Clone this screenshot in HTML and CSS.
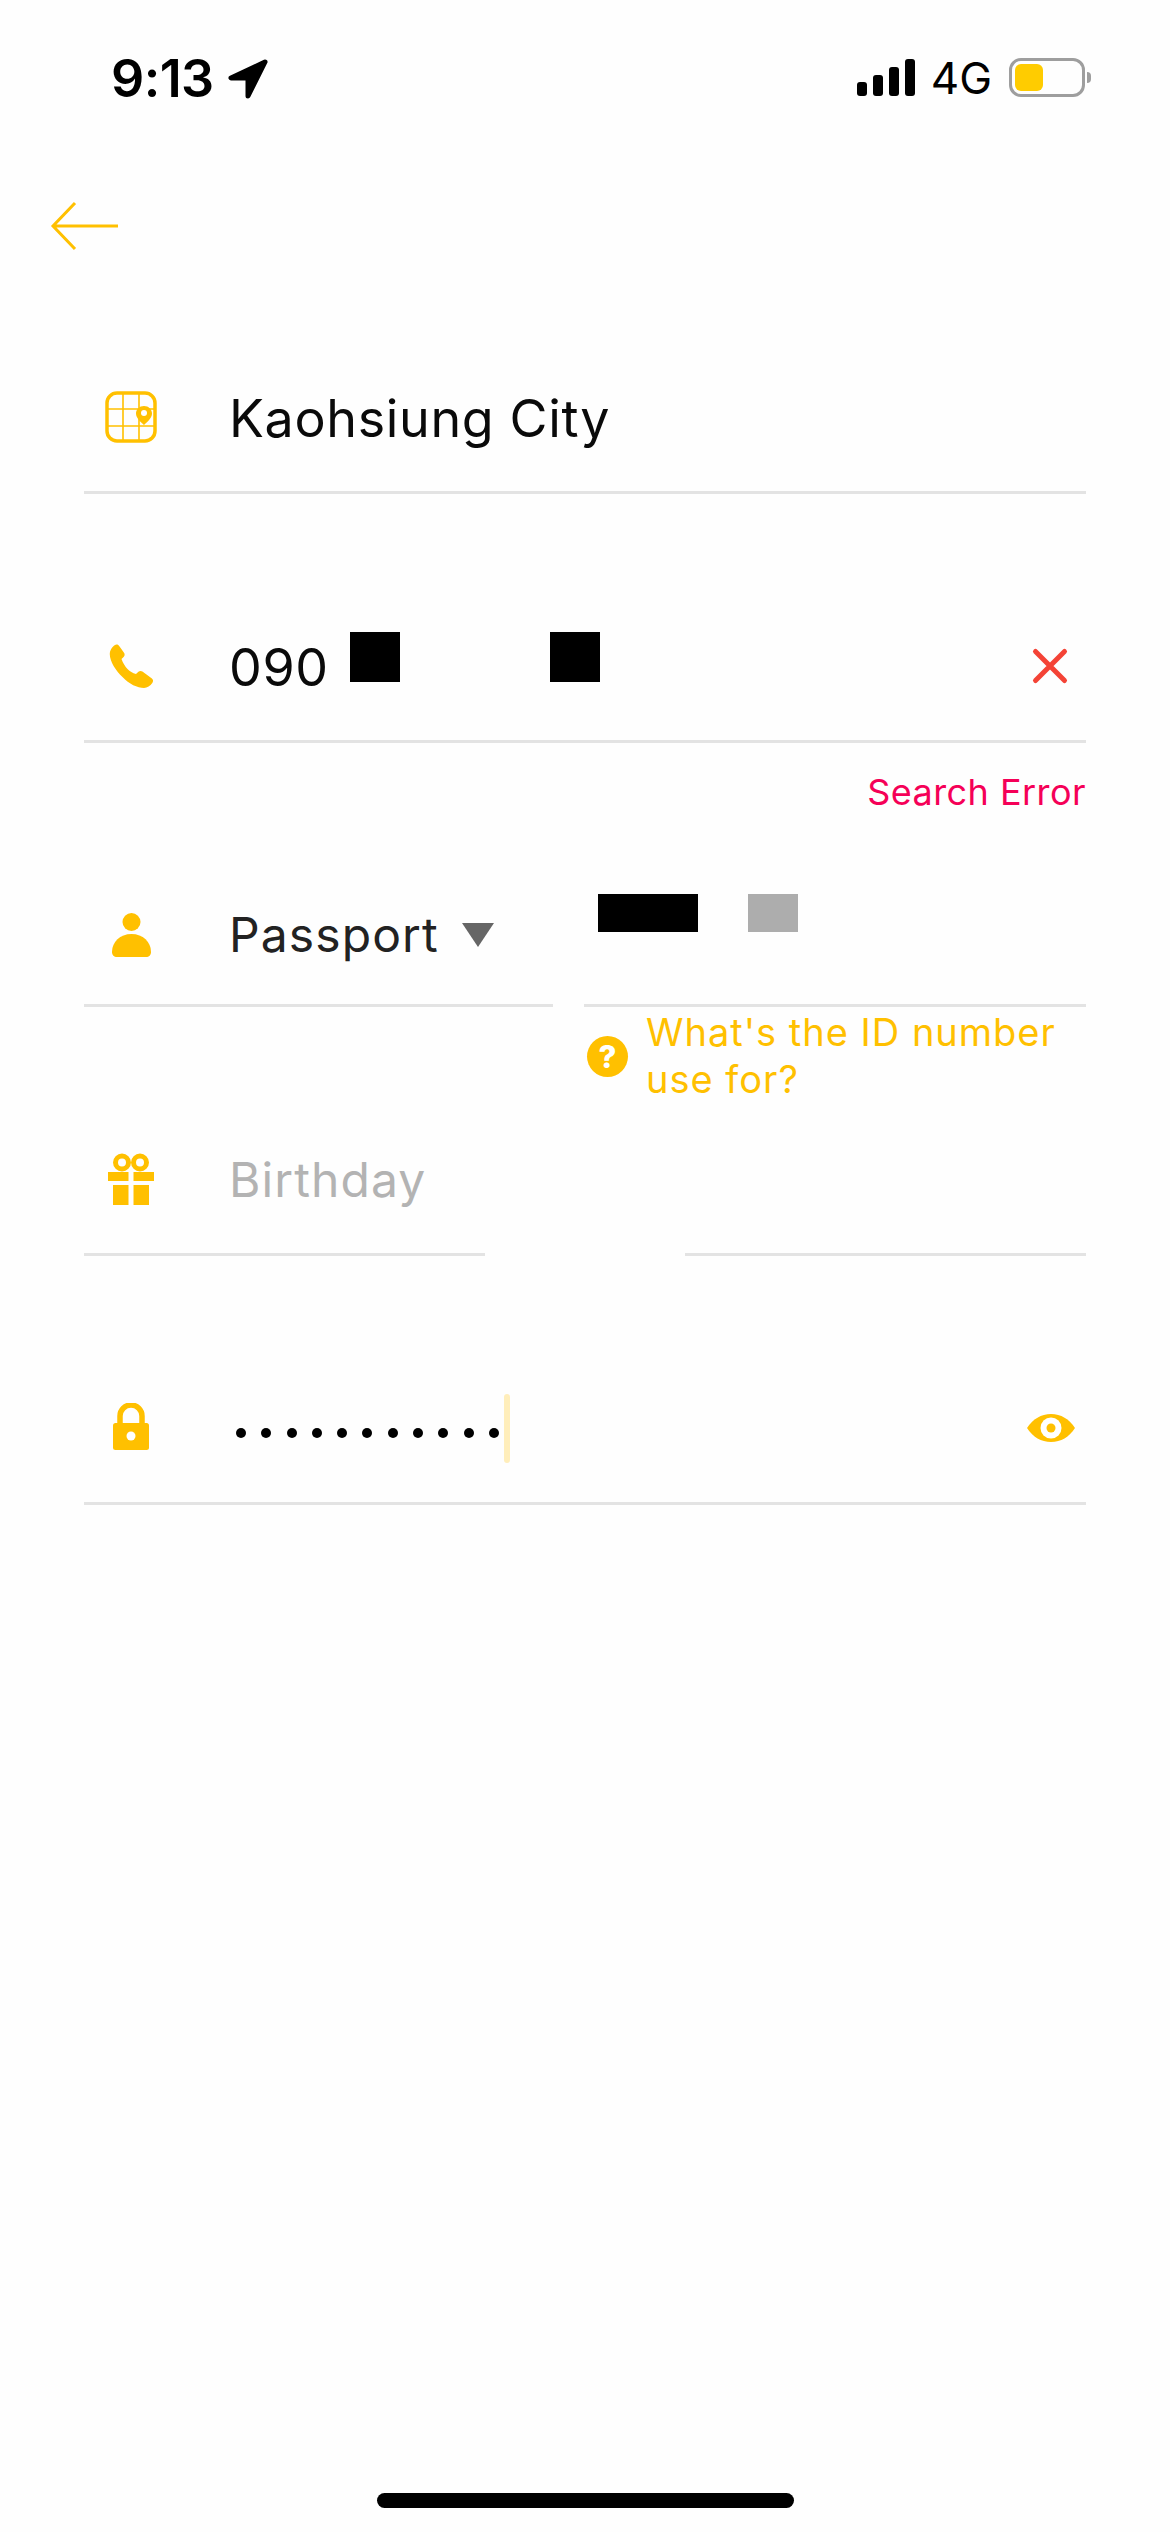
FILE: index.html
```html
<!DOCTYPE html>
<html lang="en">
<head>
  <meta charset="UTF-8">
  <meta name="viewport" content="width=device-width, initial-scale=1.0">
  <title>Sign up</title>
  <link rel="stylesheet" href="styles.css">
</head>
<body>

<div class="status">
  <div class="status-left">
    <span class="time">9:13</span>
    <svg class="loc" width="40" height="40" viewBox="0 0 40 40"><path d="M37 3 3 19h17v18z" fill="#000" stroke="#000" stroke-width="5" stroke-linejoin="round"/></svg>
  </div>
  <div class="status-right">
    <div class="signal"><i class="b1"></i><i class="b2"></i><i class="b3"></i><i class="b4"></i></div>
    <span class="net">4G</span>
    <div class="battery"><div class="battery-fill"></div></div>
    <div class="battery-tip"></div>
  </div>
</div>

<div class="back">
  <svg width="70" height="50" viewBox="0 0 70 50"><path d="M68 25H3M25 2 3 25l22 23" fill="none" stroke="#ffc000" stroke-width="3"/></svg>
</div>

<form class="form">
  <div class="field">
    <span class="icon">
      <svg width="52" height="52" viewBox="0 0 52 52">
        <rect x="2" y="2" width="48" height="48" rx="10" fill="none" stroke="#ffc000" stroke-width="3.5"/>
        <path d="M18 3v46M34 3v46M3 18h46M3 35h46" stroke="#ffc000" stroke-width="1.6"/>
        <path d="M39 15c-4.600 0-8 3.400-8 7.600 0 4.600 4.600 8.400 8 11.400 3.400-3 8-6.800 8-11.400 0-4.200-3.400-7.600-8-7.600z" fill="#ffc000"/>
        <circle cx="39" cy="22" r="3" fill="#fff"/>
      </svg>
    </span>
    <span class="value">Kaohsiung City</span>
  </div>

  <div class="field phone">
    <span class="icon">
      <svg width="45" height="45" viewBox="0 0 45 45"><path d="M6 1c1.500-1 3-.5 4 .8l5 7c1 1.500.8 3-.4 4.200L12.500 15c1.500 4 3.500 7.500 6 10s5 4 8.500 5l2.400-2.200c1.200-1 2.800-1.100 4-.2l9.500 7c1.400 1.100 1.500 3 .4 4.400-2 2.700-5 5-8.300 5-6.500 0-15-4-21.500-11C6.500 26.500 1 17.500.8 10.500.7 6.500 3 3 6 1z" fill="#ffc000"/></svg>
    </span>
    <span class="value">090</span>
    <span class="mask mask-a"></span>
    <span class="mask mask-b"></span>
    <svg class="clear" width="40" height="40" viewBox="0 0 40 40"><path d="M5.500 5.500l29 29M34.500 5.500l-29 29" stroke="#f44336" stroke-width="5" stroke-linecap="round"/></svg>
  </div>
  <div class="error">Search Error</div>

  <div class="id-row">
    <div class="field id-type">
      <span class="icon">
        <svg width="39" height="45" viewBox="0 0 39 45"><circle cx="19.500" cy="9" r="9" fill="#ffc000"/><path d="M0 39c0-10 8-18 19.500-18S39 29 39 39c0 3-2 5-5 5H5c-3 0-5-2-5-5z" fill="#ffc000"/></svg>
      </span>
      <span class="value small">Passport</span>
      <span class="caret-down"></span>
    </div>
    <div class="id-col">
      <div class="field id-number">
        <span class="mask mask-c"></span>
        <span class="mask mask-d"></span>
      </div>
      <div class="help">
        <span class="help-icon">?</span>
        <span class="help-text">What's the ID number use for?</span>
      </div>
    </div>
  </div>

  <div class="birth-row">
    <div class="field">
      <span class="icon">
        <svg width="46" height="52" viewBox="0 0 46 52">
          <circle cx="14" cy="9.500" r="6.500" fill="none" stroke="#ffc000" stroke-width="5"/>
          <circle cx="32" cy="9.500" r="6.500" fill="none" stroke="#ffc000" stroke-width="5"/>
          <path d="M0 19h20.500v9H0zM25.500 19H46v9H25.500zM5 32h15.500v20H5zM25.500 32H41v20H25.500z" fill="#ffc000"/>
        </svg>
      </span>
      <span class="value small placeholder">Birthday</span>
    </div>
    <div class="field"></div>
  </div>

  <div class="field password">
    <span class="icon lock">
      <svg width="36" height="47" viewBox="0 0 36 47">
        <path d="M7 22v-9a11 11 0 0 1 22 0v9" fill="none" stroke="#ffc000" stroke-width="5.500"/>
        <rect x="0" y="20" width="36" height="27" rx="2.500" fill="#ffc000"/>
        <circle cx="18" cy="33" r="4.500" fill="#fff"/>
      </svg>
    </span>
    <span class="dots">
      <i></i><i></i><i></i><i></i><i></i><i></i><i></i><i></i><i></i><i></i><i></i>
    </span>
    <span class="cursor"></span>
    <svg class="eye" width="48" height="28" viewBox="0 0 48 28">
      <path d="M0 14C6 5 14 0 24 0s18 5 24 14c-6 9-14 14-24 14S6 23 0 14z" fill="#ffc000"/>
      <circle cx="24" cy="14" r="10.500" fill="#fff"/>
      <circle cx="24" cy="14" r="4.500" fill="#ffc000"/>
    </svg>
  </div>
</form>

<div class="home-bar"></div>

</body>
</html>
```

FILE: styles.css
```css
* { box-sizing: border-box; }
html, body { margin: 0; padding: 0; }
body { width: 1170px; height: 2532px; background-color: #fefefe; font-family: Inter, "Liberation Sans", sans-serif; color: #000; position: relative; overflow: hidden; }

.status { height: 130px; padding: 59px 79px 0 111px; display: flex; justify-content: space-between; align-items: flex-start; }
.status-left { display: flex; align-items: center; height: 40px; }
.time { font-size: 52px; font-weight: 600; line-height: 40px; letter-spacing: -0.6px; }
.loc { margin-left: 14px; }
.status-right { display: flex; align-items: flex-start; margin-top: -1px; }
.signal { display: flex; align-items: flex-end; gap: 6px; height: 38px; }
.signal i { display: block; width: 10px; background-color: #000; border-radius: 3px; }
.b1 { height: 14px; }
.b2 { height: 21px; }
.b3 { height: 29px; }
.b4 { height: 37px; }
.net { font-size: 44px; line-height: 40px; margin-left: 16px; margin-right: 17px; }
.battery { width: 76px; height: 39px; border: 3px solid #9e9e9e; border-radius: 12px; padding: 3px; }
.battery-fill { width: 28px; height: 27px; background-color: #ffcc00; border-radius: 6px; }
.battery-tip { width: 4px; height: 11px; margin: 14px 0 0 2px; background-color: #9e9e9e; border-radius: 0 4px 4px 0; }

.back { height: 192px; padding-left: 50px; display: flex; align-items: center; }

.form { padding: 21px 84px 0; }
.field { height: 151px; display: flex; align-items: center; border-bottom: 3px solid #e3e3e3; }
.icon { width: 94px; margin-right: 51px; display: flex; justify-content: center; }
.lock { margin-bottom: 4px; }
.value { font-size: 52px; letter-spacing: 0.65px; line-height: 60px; color: #0a0a0a; margin-top: 3px; }
.small { font-size: 48px; color: #222; letter-spacing: 1.1px; margin-top: 0; }
.placeholder { color: #b3b3b3; margin-top: 2px; }

.phone { margin-top: 98px; }
.mask { display: block; background-color: #000; }
.mask-a { width: 50px; height: 50px; margin: -18px 0 0 21px; }
.mask-b { width: 50px; height: 50px; margin: -18px 0 0 150px; }
.clear { margin-left: auto; margin-right: 16px; }
.error { height: 113px; padding-top: 27px; text-align: right; font-size: 36px; line-height: 44px; color: #f50057; letter-spacing: 0.45px; }

.id-row { display: flex; gap: 31px; height: 249px; }
.id-type { width: 471px; padding-top: 10px; }
.id-col { flex: 1; }
.id-number { padding-left: 14px; }
.mask-c { width: 100px; height: 38px; margin-top: -34px; }
.mask-d { width: 50px; height: 38px; margin: -34px 0 0 50px; background-color: #adadad; }
.caret-down { width: 0; height: 0; margin-left: 23px; border-left: 16px solid transparent; border-right: 16px solid transparent; border-top: 24px solid #666; }
.help { display: flex; align-items: center; padding-left: 3px; margin-top: 2px; }
.help-icon { width: 41px; height: 41px; flex: none; margin-right: 18px; border-radius: 50%; background-color: #ffc000; color: #fff; font-size: 31px; font-weight: 800; line-height: 41px; text-align: center; }
.help-text { font-size: 38px; line-height: 47px; color: #ffc000; letter-spacing: 1px; width: 440px; }

.birth-row { display: flex; gap: 200px; }
.birth-row .field { flex: 1; }

.password { margin-top: 98px; }
.dots { display: flex; gap: 15.3px; margin: 10px 0 0 7px; }
.dots i { display: block; width: 10px; height: 10px; border-radius: 50%; background-color: #000; }
.cursor { width: 6px; height: 69px; margin-left: 5px; background-color: #ffeebb; border-radius: 3px; }
.eye { margin-left: auto; margin-right: 11px; }

.home-bar { position: absolute; left: 377px; bottom: 24px; width: 417px; height: 15px; border-radius: 8px; background-color: #000; }
```
